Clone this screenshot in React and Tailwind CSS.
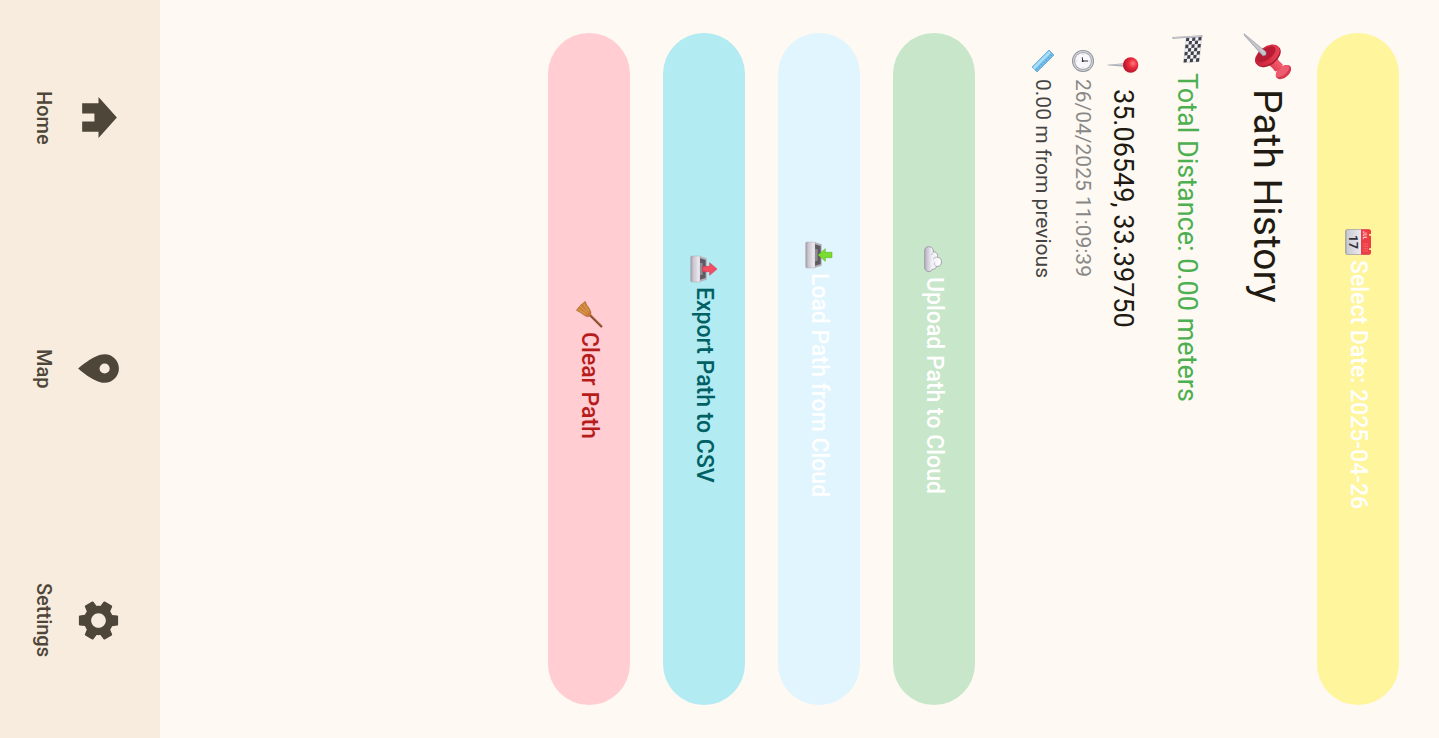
import { MdHome, MdPlace, MdSettings } from "react-icons/md";

function Pushpin({ className }) {
  return (
    <svg viewBox="0 0 140 140" className={className} aria-hidden="true">
      <defs>
        <linearGradient id="pp-needle" x1="0" y1="0" x2="1" y2="1">
          <stop offset="0" stopColor="#f4f4f8" />
          <stop offset="0.5" stopColor="#c3c5ce" />
          <stop offset="1" stopColor="#7c7f8a" />
        </linearGradient>
        <linearGradient id="pp-body" x1="0" y1="0" x2="1" y2="1">
          <stop offset="0" stopColor="#c92a40" />
          <stop offset="0.4" stopColor="#f2586a" />
          <stop offset="1" stopColor="#c9283f" />
        </linearGradient>
        <linearGradient id="pp-disc" x1="0" y1="0" x2="1" y2="0.6">
          <stop offset="0" stopColor="#ec4a5c" />
          <stop offset="0.5" stopColor="#d92f45" />
          <stop offset="1" stopColor="#c22239" />
        </linearGradient>
      </defs>
      <ellipse cx="114" cy="22" rx="26" ry="16" transform="rotate(50 114 22)" fill="#d8384e" />
      <ellipse cx="111" cy="25" rx="23" ry="12" transform="rotate(50 111 25)" fill="#ee5c6f" />
      <path d="M46 50 Q76 46 92 24 Q108 26 112 46 Q88 62 86 90 Z" fill="url(#pp-body)" />
      <ellipse cx="68" cy="66" rx="41" ry="25" transform="rotate(53 68 66)" fill="#a8182f" />
      <ellipse cx="65" cy="69" rx="41" ry="25" transform="rotate(53 65 69)" fill="url(#pp-disc)" />
      <ellipse cx="62" cy="73" rx="32" ry="16" transform="rotate(53 62 73)" fill="#b81c34" />
      <path d="M2 137 L54 74 Q66 68 67 82 L8 135 Z" fill="url(#pp-needle)" stroke="#7d7f8a" strokeWidth="1.5" />
    </svg>
  );
}

function Flag({ className }) {
  const cells = [];
  for (let r = 0; r < 5; r++) {
    for (let c = 0; c < 7; c++) {
      if ((r + c) % 2 === 0) {
        const x = 11 + c * 10.2 + r * 0.5;
        const y = 4 + r * 8.8 + c * 1.1;
        cells.push(
          <path key={r + "-" + c} d={`M${x} ${y} l10.2 1.1 l0.5 8.8 l-10.2 -1.1 Z`} fill="#41414b" />
        );
      }
    }
  }
  return (
    <svg viewBox="0 0 92 92" className={className} aria-hidden="true">
      <path d="M11 4 L82 11 Q84 34 85 56 L13 48 Z" fill="#f3f3f7" stroke="#9c9ca6" strokeWidth="1" />
      {cells}
      <path d="M9 3 L14 86" stroke="#a0a1aa" strokeWidth="4.5" strokeLinecap="round" />
      <path d="M9 4 L13 84" stroke="#dedee4" strokeWidth="2" />
    </svg>
  );
}

function RoundPin({ className }) {
  return (
    <svg viewBox="0 0 96 96" className={className} aria-hidden="true">
      <defs>
        <radialGradient id="rp-ball" cx="0.4" cy="0.35" r="0.65">
          <stop offset="0" stopColor="#ff7a80" />
          <stop offset="0.45" stopColor="#e92c3c" />
          <stop offset="1" stopColor="#b3142a" />
        </radialGradient>
      </defs>
      <path d="M43 44 H53 L49 95 H47 Z" fill="#a4a6b0" />
      <path d="M46 44 H49 L48 90 Z" fill="#e6e7ec" />
      <circle cx="48" cy="25" r="23" fill="url(#rp-ball)" />
    </svg>
  );
}

function Clock({ className }) {
  return (
    <svg viewBox="0 0 72 72" className={className} aria-hidden="true">
      <circle cx="36" cy="36" r="33" fill="#8e8f97" />
      <circle cx="36" cy="36" r="30.5" fill="#cfd0d6" />
      <circle cx="36" cy="36" r="26" fill="#92939b" />
      <circle cx="36" cy="36" r="24" fill="#f8f8fc" />
      <path d="M36 36 V22 M37 37 L26 38" stroke="#33333b" strokeWidth="3" strokeLinecap="round" />
      <circle cx="36" cy="37" r="3" fill="#33333b" />
      <path d="M36 14v3M36 55v3M14 36h3M55 36h3" stroke="#8b8b94" strokeWidth="2" />
    </svg>
  );
}

function Ruler({ className }) {
  return (
    <svg viewBox="0 0 72 72" className={className} aria-hidden="true">
      <path d="M3 18 L18 3 L69 54 L54 69 Z" fill="#6fbbe8" stroke="#4e9ccc" strokeWidth="2" />
      <path d="M6 18 L12 12 L62 62 L54 66 Z" fill="#a9def8" />
      <path d="M21 10l-5 5M28 17l-4 4M35 24l-5 5M42 31l-4 4M49 38l-5 5M56 45l-4 4M63 52l-5 5" stroke="#3f87b8" strokeWidth="1.5" />
    </svg>
  );
}

function CalendarIcon({ className }) {
  return (
    <svg viewBox="0 0 84 84" className={className} aria-hidden="true">
      <defs>
        <linearGradient id="cal-body" x1="0" y1="0" x2="0" y2="1">
          <stop offset="0" stopColor="#ffffff" />
          <stop offset="1" stopColor="#c9c9d3" />
        </linearGradient>
      </defs>
      <rect x="4" y="6" width="76" height="74" rx="6" fill="#8c8c98" />
      <rect x="5" y="6" width="74" height="71" rx="5" fill="url(#cal-body)" />
      <path d="M4 33 V9 Q4 3 10 3 H74 Q80 3 80 9 V33 Z" fill="#ee3e45" />
      <rect x="18" y="0" width="5" height="9" rx="2" fill="#fff3a8" />
      <rect x="61" y="0" width="5" height="9" rx="2" fill="#fff3a8" />
      <text x="9" y="27" fontFamily="Roboto, sans-serif" fontSize="14" fontWeight="700" fill="#ffd5d5">JUL</text>
      <path d="M46 14h27M46 19h27M46 24h27" stroke="#f98488" strokeWidth="2" strokeDasharray="4 3" />
      <text x="42" y="69" textAnchor="middle" fontFamily="Roboto, sans-serif" fontSize="36" fontWeight="700" fill="#33333b">17</text>
    </svg>
  );
}

function Cloud({ className }) {
  return (
    <svg viewBox="0 0 84 84" className={className} aria-hidden="true">
      <defs>
        <linearGradient id="cloud-fill" x1="0" y1="0" x2="0" y2="1">
          <stop offset="0" stopColor="#ffffff" />
          <stop offset="0.6" stopColor="#efedf5" />
          <stop offset="1" stopColor="#b4afbf" />
        </linearGradient>
      </defs>
      <path
        d="M18 70 C8 70 4 63 5 56 C6 47 13 43 20 44 C20 34 29 29 37 32 C38 22 46 18 54 20 C62 22 66 29 64 35 C71 36 74 42 73 47 C79 50 81 56 79 62 C77 68 72 70 66 70 Z"
        fill="url(#cloud-fill)" stroke="#96919f" strokeWidth="2.5"
      />
      <path d="M37 32 C35 37 37 42 42 43 M64 35 C62 40 57 42 53 40 M20 44 C24 44 28 47 29 50" fill="none" stroke="#b2aebb" strokeWidth="2.5" strokeLinecap="round" />
    </svg>
  );
}

function Tray({ className, up }) {
  const id = up ? "tray-up" : "tray-down";
  return (
    <svg viewBox="0 0 84 84" className={className} aria-hidden="true">
      <defs>
        <linearGradient id={id} x1="0" y1="0" x2="0" y2="1">
          <stop offset="0" stopColor="#f3eff5" />
          <stop offset="0.7" stopColor="#cbc6cf" />
          <stop offset="1" stopColor="#a19ca6" />
        </linearGradient>
      </defs>
      <path d="M10 34 H74 L81 56 H3 Z" fill="#b4b0b8" />
      <path d="M15 37 H69 L74 54 H10 Z" fill="#5d5a61" />
      <path d="M25 46 H59 L61 55 H23 Z" fill="#8e8b92" />
      <path d="M3 54 H81 V78 Q81 82 77 82 H7 Q3 82 3 78 Z" fill={`url(#${id})`} stroke="#99949d" strokeWidth="1" />
      {up ? (
        <path d="M42 3 L61 25 H50 V46 H34 V25 H23 Z" fill="#f24d61" stroke="#cf2e48" strokeWidth="1.5" strokeLinejoin="round" />
      ) : (
        <path d="M34 3 H50 V23 H61 L42 45 L23 23 H34 Z" fill="#7bdc2f" stroke="#4fae17" strokeWidth="1.5" strokeLinejoin="round" />
      )}
    </svg>
  );
}

function Broom({ className }) {
  return (
    <svg viewBox="0 0 84 84" className={className} aria-hidden="true">
      <path d="M40 44 L79 5" stroke="#8a4c31" strokeWidth="7" strokeLinecap="round" />
      <path d="M41 41 L77 5" stroke="#cf8152" strokeWidth="2" strokeLinecap="round" />
      <path d="M24 42 Q38 32 47 38 Q54 46 46 56 Q38 66 31 80 Q15 70 4 53 Q16 50 24 42 Z" fill="#c98237" stroke="#9c5c26" strokeWidth="1.5" />
      <path d="M33 42 Q23 53 11 58 M38 46 Q29 59 19 68 M43 50 Q36 64 28 74" fill="none" stroke="#deA052" strokeWidth="3" />
      <path d="M36 37 L49 50" stroke="#d9623c" strokeWidth="3" />
    </svg>
  );
}

function Pill({ icon, children, className }) {
  return (
    <button
      type="button"
      className={"flex w-[82px] shrink-0 cursor-pointer items-center justify-center gap-1 rounded-full text-[23px] font-medium whitespace-nowrap " + className}
    >
      {icon}
      <span>{children}</span>
    </button>
  );
}

function NavItem({ icon: Icon, label }) {
  return (
    <a href={"#" + label.toLowerCase()} className="flex flex-1 flex-col items-center justify-center gap-[14px]">
      <Icon className="size-[49px] rotate-90" aria-hidden="true" />
      <span className="text-xl leading-[32px] font-medium">{label}</span>
    </a>
  );
}

const small = "size-6 shrink-0 rotate-90 [writing-mode:horizontal-tb]";
const medium = "size-7 shrink-0 rotate-90 [writing-mode:horizontal-tb]";
const regular = "size-8 shrink-0 rotate-90 [writing-mode:horizontal-tb]";

export default function App() {
  return (
    <div className="flex min-h-screen w-full flex-col bg-[#fef9f2] font-['Roboto',sans-serif] text-[#1f1b13] [writing-mode:vertical-rl]">
      <main className="flex flex-1 flex-col px-[33px] pr-10">
        <Pill className="bg-[#fff59d] text-white" icon={<CalendarIcon className={medium} />}>
          Select Date: 2025-04-26
        </Pill>

        <h1 className="mr-[26px] flex items-center gap-2 text-[39px] leading-[48px] whitespace-nowrap">
          <Pushpin className="size-12 shrink-0 rotate-90" />
          <span>Path History</span>
        </h1>

        <p className="mr-9 flex items-center gap-2 text-[27px] leading-[40px] whitespace-nowrap text-[#4caf50]">
          <Flag className={regular} />
          <span>Total Distance: 0.00 meters</span>
        </p>

        <ul className="mr-6">
          <li className="px-4 whitespace-nowrap">
            <p className="flex items-center gap-2 text-[27px] leading-[40px]">
              <RoundPin className={regular} />
              <span>35.06549, 33.39750</span>
            </p>
            <p className="flex items-center gap-1.5 text-[21px] leading-[40px] text-[#888888]">
              <Clock className={small} />
              <span>26/04/2025 11:09:39</span>
            </p>
            <p className="flex items-center gap-1.5 text-[21px] leading-[40px] text-[#444444]">
              <Ruler className={small} />
              <span>0.00 m from previous</span>
            </p>
          </li>
        </ul>

        <div className="mr-12 flex flex-col gap-[33px]">
          <Pill className="bg-[#c8e6c9] text-white" icon={<Cloud className={medium} />}>
            Upload Path to Cloud
          </Pill>
          <Pill className="bg-[#e1f5fe] text-white" icon={<Tray className={medium} />}>
            Load Path from Cloud
          </Pill>
          <Pill className="bg-[#b2ebf2] text-[#006064]" icon={<Tray up className={medium} />}>
            Export Path to CSV
          </Pill>
          <Pill className="bg-[#ffcdd2] text-[#b71c1c]" icon={<Broom className={medium} />}>
            Clear Path
          </Pill>
        </div>
      </main>

      <nav className="flex w-40 shrink-0 gap-4 bg-[#f8ecdf] pr-[9px] text-[#4d4639]">
        <NavItem icon={MdHome} label="Home" />
        <NavItem icon={MdPlace} label="Map" />
        <NavItem icon={MdSettings} label="Settings" />
      </nav>
    </div>
  );
}
